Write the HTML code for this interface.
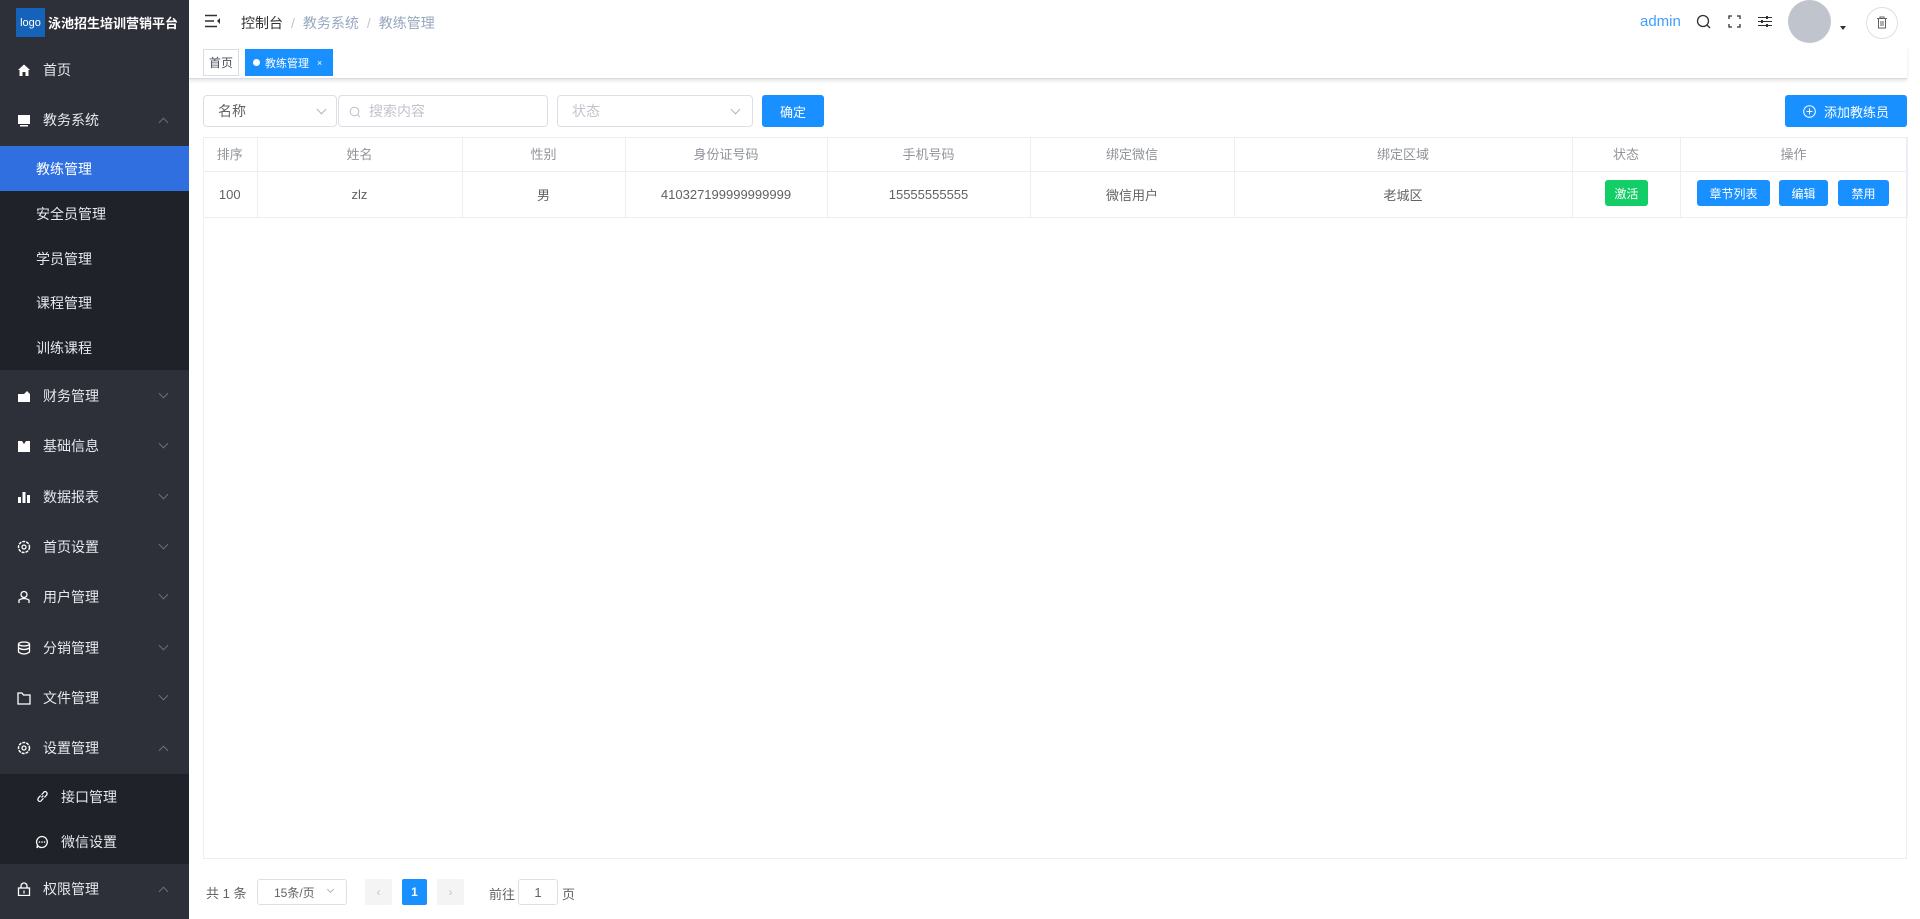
<!DOCTYPE html>
<html><head><meta charset="utf-8"><style>
*{box-sizing:border-box;margin:0;padding:0}
body{width:1920px;height:919px;overflow:hidden;background:#fff;font-family:"Liberation Sans","Noto Sans CJK SC",sans-serif;font-size:14px;color:#606266;position:relative}
.abs{position:absolute}
#side{position:absolute;left:0;top:0;width:189px;height:919px;background:#2d3039}
.mi{position:absolute;left:0;width:189px;height:50px;color:#e6e8ec;font-size:14px;display:flex;align-items:center}
.mi .ic{position:absolute;left:17px;width:14px;height:14px}
.mi .tx{position:absolute;left:43px}
.mi .ar{position:absolute;left:160px;width:7px;height:7px;border-right:1px solid #6b6f78;border-bottom:1px solid #6b6f78;transform:rotate(45deg)}
.mi .ar.up{transform:rotate(-135deg);top:24px}
.sub{position:absolute;left:0;width:189px;background:#1f2229}
.si{position:absolute;left:0;width:189px;height:45px;display:flex;align-items:center;color:#e6e8ec;font-size:14px}
.si .tx{position:absolute;left:36px}
.hdr{color:#909399}
th,td{border-right:1px solid #ebeef5;border-bottom:1px solid #ebeef5;text-align:center;font-weight:normal}
table{border-collapse:collapse;table-layout:fixed}
.btn{position:absolute;background:#1890ff;color:#fff;border-radius:3px;font-size:12px;display:flex;align-items:center;justify-content:center}
.inp{position:absolute;border:1px solid #dcdfe6;border-radius:4px;background:#fff;display:flex;align-items:center;color:#c0c4cc}
.chev{position:absolute;width:7px;height:7px;border-right:1px solid #b0b3b8;border-bottom:1px solid #b0b3b8;transform:rotate(45deg)}
</style></head><body>
<div id="side">
  <div class="abs" style="left:16px;top:8px;width:29px;height:29px;background:#1563b8;color:#fff;font-size:11px;display:flex;align-items:center;justify-content:center">logo</div>
  <div class="abs" style="left:48px;top:13px;color:#fff;font-weight:bold;font-size:13px">泳池招生培训营销平台</div>

  <div class="mi" style="top:45px"><svg class="ic" viewBox="0 0 14 14"><path d="M1 7 L7 1.5 L13 7 L11.5 7 L11.5 13 L8.5 13 L8.5 9 L5.5 9 L5.5 13 L2.5 13 L2.5 7Z" fill="#fff"/></svg><span class="tx">首页</span></div>
  <div class="mi" style="top:95px"><svg class="ic" viewBox="0 0 14 14"><rect x="1" y="2" width="12" height="9" fill="#fff"/><rect x="3" y="12" width="8" height="1.5" fill="#fff"/></svg><span class="tx">教务系统</span><i class="ar up" style="top:24px"></i></div>
  <div class="sub" style="top:146px;height:224px">
    <div class="si" style="top:0;background:#2f6fe0;color:#fff"><span class="tx">教练管理</span></div>
    <div class="si" style="top:45px"><span class="tx">安全员管理</span></div>
    <div class="si" style="top:90px"><span class="tx">学员管理</span></div>
    <div class="si" style="top:134px"><span class="tx">课程管理</span></div>
    <div class="si" style="top:179px"><span class="tx">训练课程</span></div>
  </div>
  <div class="mi" style="top:371px"><svg class="ic" viewBox="0 0 14 14"><path d="M1 5 L7 5 L10 2 L13 5 L13 13 L1 13Z" fill="#fff"/></svg><span class="tx">财务管理</span><i class="ar" style="top:19px"></i></div>
  <div class="mi" style="top:421px"><svg class="ic" viewBox="0 0 14 14"><path d="M1 2 L5 2 L7 5 L9 2 L13 2 L13 13 L1 13Z" fill="#fff"/></svg><span class="tx">基础信息</span><i class="ar" style="top:19px"></i></div>
  <div class="mi" style="top:472px"><svg class="ic" viewBox="0 0 14 14"><rect x="1" y="7" width="3" height="6" fill="#fff"/><rect x="5.5" y="2" width="3" height="11" fill="#fff"/><rect x="10" y="5" width="3" height="8" fill="#fff"/></svg><span class="tx">数据报表</span><i class="ar" style="top:19px"></i></div>
  <div class="mi" style="top:522px"><svg class="ic" viewBox="0 0 14 14"><circle cx="7" cy="7" r="5.5" fill="none" stroke="#fff" stroke-width="1.5" stroke-dasharray="3 1"/><circle cx="7" cy="7" r="2" fill="none" stroke="#fff" stroke-width="1.3"/></svg><span class="tx">首页设置</span><i class="ar" style="top:19px"></i></div>
  <div class="mi" style="top:572px"><svg class="ic" viewBox="0 0 14 14"><circle cx="7" cy="4.5" r="3" fill="none" stroke="#fff" stroke-width="1.3"/><path d="M2 13 L2 10 Q7 7 12 10 L12 13" fill="none" stroke="#fff" stroke-width="1.3"/></svg><span class="tx">用户管理</span><i class="ar" style="top:19px"></i></div>
  <div class="mi" style="top:623px"><svg class="ic" viewBox="0 0 14 14"><ellipse cx="7" cy="3" rx="5.5" ry="2" fill="none" stroke="#fff" stroke-width="1.3"/><path d="M1.5 3 V11 Q7 15 12.5 11 V3 M1.5 7 Q7 10 12.5 7" fill="none" stroke="#fff" stroke-width="1.3"/></svg><span class="tx">分销管理</span><i class="ar" style="top:19px"></i></div>
  <div class="mi" style="top:673px"><svg class="ic" viewBox="0 0 14 14"><path d="M1 2 L5 2 L6.5 4 L13 4 L13 13 L1 13Z" fill="none" stroke="#fff" stroke-width="1.3"/></svg><span class="tx">文件管理</span><i class="ar" style="top:19px"></i></div>
  <div class="mi" style="top:723px"><svg class="ic" viewBox="0 0 14 14"><circle cx="7" cy="7" r="5.5" fill="none" stroke="#fff" stroke-width="1.5" stroke-dasharray="3 1"/><circle cx="7" cy="7" r="2" fill="none" stroke="#fff" stroke-width="1.3"/></svg><span class="tx">设置管理</span><i class="ar up"></i></div>
  <div class="sub" style="top:774px;height:90px">
    <div class="si" style="top:0"><svg class="abs" style="left:36px;width:13px;height:13px" viewBox="0 0 14 14"><path d="M6 8 L8 6 M5 6 L3 8 Q1 10 3 12 Q5 13 6 11 L8 9 M9 8 L11 6 Q13 4 11 2 Q9 1 8 3 L6 5" fill="none" stroke="#fff" stroke-width="1.3"/></svg><span class="tx" style="left:61px">接口管理</span></div>
    <div class="si" style="top:45px"><svg class="abs" style="left:35px;width:14px;height:14px" viewBox="0 0 14 14"><path d="M7 1.5 A5.5 5.5 0 1 1 3 11 L2 13 L2.5 10 A5.5 5.5 0 0 1 7 1.5Z" fill="none" stroke="#fff" stroke-width="1.3"/><circle cx="4.5" cy="7" r=".8" fill="#fff"/><circle cx="7" cy="7" r=".8" fill="#fff"/><circle cx="9.5" cy="7" r=".8" fill="#fff"/></svg><span class="tx" style="left:61px">微信设置</span></div>
  </div>
  <div class="mi" style="top:864px"><svg class="ic" viewBox="0 0 14 14"><rect x="1.5" y="6" width="11" height="7.5" fill="none" stroke="#fff" stroke-width="1.3"/><path d="M4 6 V4 A3 3 0 0 1 10 4 V6" fill="none" stroke="#fff" stroke-width="1.3"/><rect x="6.4" y="8.5" width="1.2" height="3" fill="#fff"/></svg><span class="tx">权限管理</span><i class="ar up"></i></div>
</div>

<!-- header -->
<svg class="abs" style="left:205px;top:14px;width:15px;height:14px" viewBox="0 0 15 14"><path d="M0 1.5H12M0 7H9M0 12.5H12" stroke="#303133" stroke-width="1.6"/><path d="M15 4 L12 7 L15 10Z" fill="#303133"/></svg>
<div class="abs" style="left:241px;top:13px;font-size:14px;color:#303133">控制台<span style="color:#c0c4cc;margin:0 8px">/</span><span style="color:#97a8be">教务系统</span><span style="color:#c0c4cc;margin:0 8px">/</span><span style="color:#97a8be">教练管理</span></div>
<div class="abs" style="left:1640px;top:13px;font-size:15px;color:#409eff">admin</div>
<svg class="abs" style="left:1696px;top:14px;width:15px;height:15px" viewBox="0 0 15 15"><circle cx="7" cy="7" r="5.5" fill="none" stroke="#303133" stroke-width="1.3"/><path d="M11 11 L14 14" stroke="#303133" stroke-width="1.3"/></svg>
<svg class="abs" style="left:1728px;top:15px;width:13px;height:13px" viewBox="0 0 13 13"><path d="M1 4V1H4M9 1H12V4M12 9V12H9M4 12H1V9" fill="none" stroke="#303133" stroke-width="1.3"/></svg>
<svg class="abs" style="left:1758px;top:15px;width:14px;height:13px" viewBox="0 0 14 13"><path d="M0 2.5H14M0 6.5H14M0 10.5H14" stroke="#303133" stroke-width="1"/><rect x="8" y="1" width="2" height="3" fill="#303133"/><rect x="3" y="5" width="2" height="3" fill="#303133"/><rect x="8" y="9" width="2" height="3" fill="#303133"/></svg>
<div class="abs" style="left:1788px;top:0;width:43px;height:43px;border-radius:50%;background:#c0c4cc"></div>
<div class="abs" style="left:1840px;top:26px;width:0;height:0;border-left:3px solid transparent;border-right:3px solid transparent;border-top:4px solid #303133"></div>
<div class="abs" style="left:1866px;top:7px;width:32px;height:32px;border-radius:50%;border:1px solid #dcdfe6"></div>
<svg class="abs" style="left:1876px;top:16px;width:12px;height:13px" viewBox="0 0 12 13"><path d="M1 2.5H11M4 2.5V1H8V2.5M2.5 2.5V12H9.5V2.5M5 5V10M7 5V10" fill="none" stroke="#606266" stroke-width="1"/></svg>

<!-- tags -->
<div class="abs" style="left:189px;top:45px;width:1718px;height:34px;background:#fff;border-bottom:1px solid #d8dce5;box-shadow:0 2px 3px rgba(0,0,0,.1)"></div>
<div class="abs" style="left:203px;top:49px;width:36px;height:27px;border:1px solid #d8dce5;font-size:12px;color:#495060;display:flex;align-items:center;justify-content:center">首页</div>
<div class="abs" style="left:245px;top:49px;width:88px;height:27px;background:#1890ff;font-size:11px;color:#fff;display:flex;align-items:center;padding-left:8px"><span style="width:7px;height:7px;border-radius:50%;background:#fff;margin-right:5px"></span>教练管理<span style="margin-left:8px;font-size:9px">×</span></div>

<!-- filters -->
<div class="inp" style="left:203px;top:95px;width:134px;height:32px;color:#606266;padding-left:14px">名称<i class="chev" style="left:114px;top:10px"></i></div>
<div class="inp" style="left:338px;top:95px;width:210px;height:32px;padding-left:30px">搜索内容<svg class="abs" style="left:10px;top:10px;width:12px;height:12px" viewBox="0 0 12 12"><circle cx="5.5" cy="5.5" r="4.3" fill="none" stroke="#c0c4cc" stroke-width="1.1"/><path d="M8.5 8.5L11 11" stroke="#c0c4cc" stroke-width="1.1"/></svg></div>
<div class="inp" style="left:557px;top:95px;width:196px;height:32px;padding-left:14px">状态<i class="chev" style="left:174px;top:10px"></i></div>
<div class="btn" style="left:762px;top:95px;width:62px;height:32px;font-size:13px">确定</div>
<div class="btn" style="left:1785px;top:95px;width:122px;height:32px;font-size:13px"><svg style="width:13px;height:13px;margin-right:8px" viewBox="0 0 13 13"><circle cx="6.5" cy="6.5" r="5.8" fill="none" stroke="#fff" stroke-width="1"/><path d="M3.5 6.5H9.5M6.5 3.5V9.5" stroke="#fff" stroke-width="1"/></svg>添加教练员</div>

<!-- table -->
<div class="abs" style="left:203px;top:137px;width:1704px;height:722px;border:1px solid #ebeef5"></div>
<table class="abs" style="left:203px;top:137px;width:1704px;font-size:13px">
<colgroup><col style="width:54px"><col style="width:205px"><col style="width:163px"><col style="width:202px"><col style="width:203px"><col style="width:204px"><col style="width:338px"><col style="width:108px"><col style="width:227px"></colgroup>
<tr class="hdr" style="height:34px"><th>排序</th><th>姓名</th><th>性别</th><th>身份证号码</th><th>手机号码</th><th>绑定微信</th><th>绑定区域</th><th>状态</th><th>操作</th></tr>
<tr style="height:46px;color:#606266"><td>100</td><td>zlz</td><td>男</td><td>410327199999999999</td><td>15555555555</td><td>微信用户</td><td>老城区</td><td></td><td></td></tr>
</table>
<div class="btn" style="left:1605px;top:180px;width:43px;height:26px;background:#13ce66">激活</div>
<div class="btn" style="left:1697px;top:180px;width:73px;height:26px">章节列表</div>
<div class="btn" style="left:1779px;top:180px;width:49px;height:26px">编辑</div>
<div class="btn" style="left:1838px;top:180px;width:51px;height:26px">禁用</div>

<!-- pagination -->
<div class="abs" style="left:206px;top:883px;font-size:13px;color:#606266">共 1 条</div>
<div class="inp" style="left:257px;top:879px;width:90px;height:26px;font-size:12px;color:#606266;padding-left:16px;border-radius:3px">15条/页<i class="chev" style="left:70px;top:7px;width:5px;height:5px"></i></div>
<div class="abs" style="left:365px;top:879px;width:27px;height:26px;background:#f4f4f5;border-radius:2px;color:#c0c4cc;font-size:12px;text-align:center;line-height:26px">‹</div>
<div class="abs" style="left:402px;top:879px;width:25px;height:26px;background:#1890ff;border-radius:2px;color:#fff;font-size:12px;font-weight:bold;text-align:center;line-height:26px">1</div>
<div class="abs" style="left:437px;top:879px;width:27px;height:26px;background:#f4f4f5;border-radius:2px;color:#c0c4cc;font-size:12px;text-align:center;line-height:26px">›</div>
<div class="abs" style="left:489px;top:884px;font-size:13px">前往</div>
<div class="inp" style="left:518px;top:879px;width:40px;height:26px;color:#606266;justify-content:center;font-size:13px;border-radius:3px">1</div>
<div class="abs" style="left:562px;top:884px;font-size:13px">页</div>
</body></html>
